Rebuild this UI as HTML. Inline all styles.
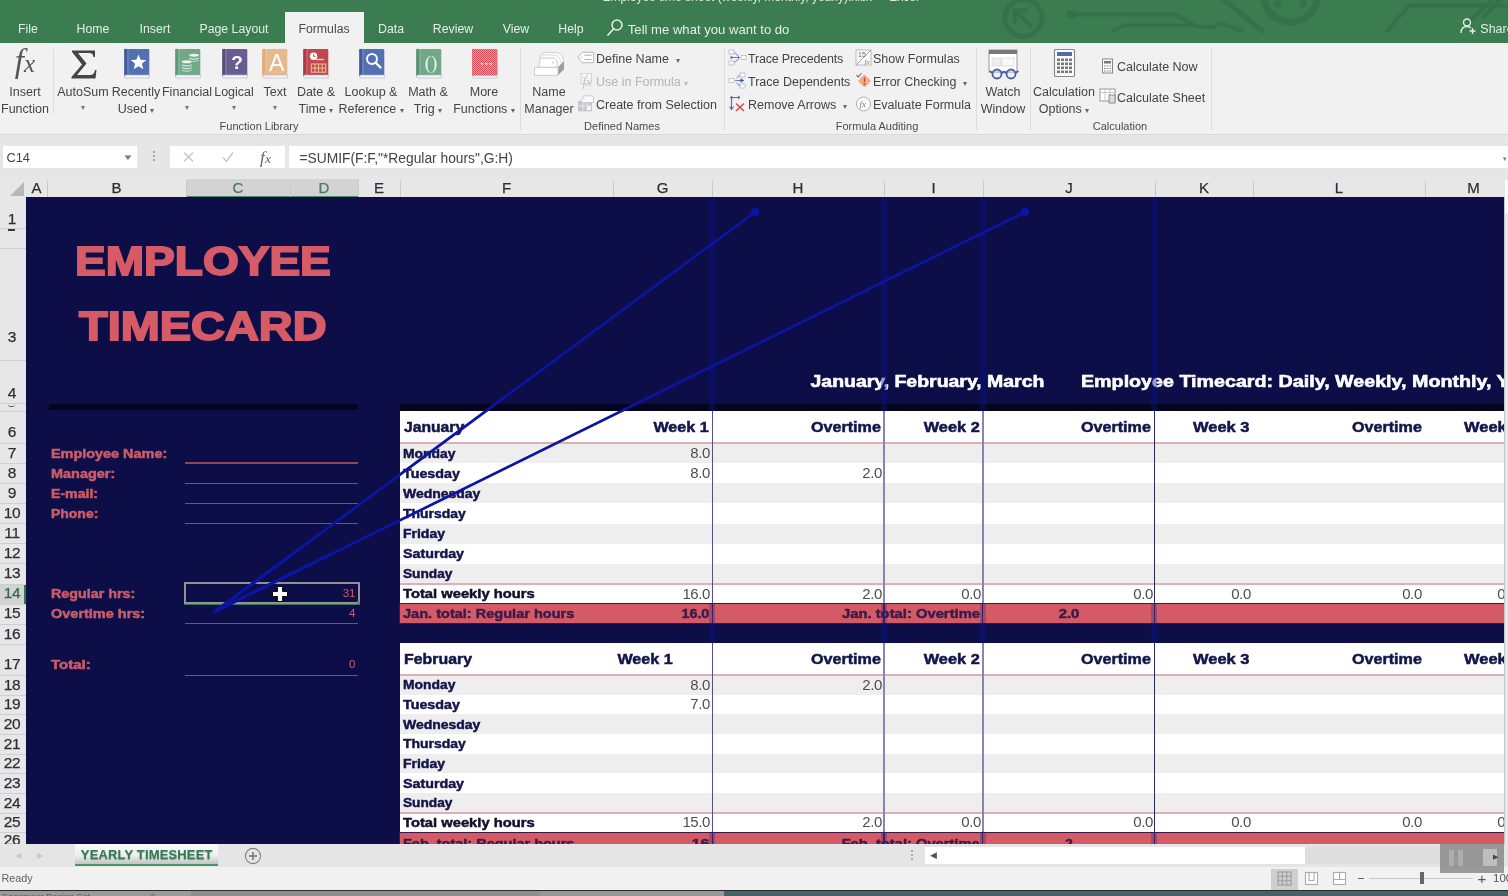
<!DOCTYPE html><html><head><meta charset="utf-8"><title>Excel</title><style>
html,body{margin:0;padding:0}body{width:1508px;height:896px;position:relative;overflow:hidden;background:#f1f1f1;font-family:"Liberation Sans",sans-serif}
.hv{transform-origin:left center}.hvr{transform-origin:right center}.hvc{transform-origin:center center}
</style></head><body><div style="position:absolute;left:0;top:0;width:1508px;height:896px;will-change:transform">
<div style="position:absolute;left:0px;top:0px;width:1508px;height:43.6px;background:#3b7c50;"></div>
<svg style="position:absolute;left:960px;top:0" width="548" height="43" viewBox="960 0 548 43"><g fill="none" stroke="#35724a" stroke-width="4.5" stroke-linecap="round" stroke-linejoin="round"><circle cx="1023.5" cy="18" r="18.5" stroke-width="5"/><path d="M1016 11 L1030 26 M1015 10.500 h11 M1015 10.500 v11" stroke-width="4.5"/><path d="M1071 14.500 H1174 L1198 27 H1214 L1220 23 L1242 31" stroke-width="4"/><circle cx="1071" cy="14.500" r="3" stroke-width="3"/><path d="M1113 31 L1124 25.500 H1190" stroke-width="3.5"/><path d="M1222 -2 L1262 31" stroke-width="5"/><circle cx="1290.500" cy="-5" r="27" stroke-width="7"/><circle cx="1278" cy="4" r="1.500"/><circle cx="1303" cy="4" r="1.500"/><path d="M1387 31 L1409 5.500 H1508 M1469 22 L1494 -2 M1484 16 L1500 0" stroke-width="4"/></g></svg>
<div style="position:absolute;top:-10.6px;line-height:16px;font-size:12px;color:#dfeae2;font-weight:normal;white-space:nowrap;font-family:'Liberation Sans',sans-serif;left:602.4px;">Employee time sheet (weekly, monthly, yearly).xlsx&nbsp; -&nbsp; Excel</div>
<div style="position:absolute;left:285px;top:12px;width:79.3px;height:32px;background:#f1f1f1;"></div>
<div style="position:absolute;top:21.15px;line-height:16.3px;font-size:12.3px;color:#e4efe7;font-weight:normal;white-space:nowrap;font-family:'Liberation Sans',sans-serif;left:-172px;width:400px;text-align:center;">File</div>
<div style="position:absolute;top:21.15px;line-height:16.3px;font-size:12.3px;color:#e4efe7;font-weight:normal;white-space:nowrap;font-family:'Liberation Sans',sans-serif;left:-107px;width:400px;text-align:center;">Home</div>
<div style="position:absolute;top:21.15px;line-height:16.3px;font-size:12.3px;color:#e4efe7;font-weight:normal;white-space:nowrap;font-family:'Liberation Sans',sans-serif;left:-45px;width:400px;text-align:center;">Insert</div>
<div style="position:absolute;top:21.15px;line-height:16.3px;font-size:12.3px;color:#e4efe7;font-weight:normal;white-space:nowrap;font-family:'Liberation Sans',sans-serif;left:34px;width:400px;text-align:center;">Page Layout</div>
<div style="position:absolute;top:21.15px;line-height:16.3px;font-size:12.3px;color:#4a4a4a;font-weight:normal;white-space:nowrap;font-family:'Liberation Sans',sans-serif;left:124px;width:400px;text-align:center;">Formulas</div>
<div style="position:absolute;top:21.15px;line-height:16.3px;font-size:12.3px;color:#e4efe7;font-weight:normal;white-space:nowrap;font-family:'Liberation Sans',sans-serif;left:191px;width:400px;text-align:center;">Data</div>
<div style="position:absolute;top:21.15px;line-height:16.3px;font-size:12.3px;color:#e4efe7;font-weight:normal;white-space:nowrap;font-family:'Liberation Sans',sans-serif;left:253px;width:400px;text-align:center;">Review</div>
<div style="position:absolute;top:21.15px;line-height:16.3px;font-size:12.3px;color:#e4efe7;font-weight:normal;white-space:nowrap;font-family:'Liberation Sans',sans-serif;left:316px;width:400px;text-align:center;">View</div>
<div style="position:absolute;top:21.15px;line-height:16.3px;font-size:12.3px;color:#e4efe7;font-weight:normal;white-space:nowrap;font-family:'Liberation Sans',sans-serif;left:371px;width:400px;text-align:center;">Help</div>
<svg style="position:absolute;left:606px;top:18px" width="18" height="20" viewBox="0 0 18 20"><circle cx="11" cy="7" r="5" fill="none" stroke="#e4efe7" stroke-width="1.5"/><path d="M7.5 11 L2 17" stroke="#e4efe7" stroke-width="1.7" stroke-linecap="round"/></svg>
<div style="position:absolute;top:20.95px;line-height:17.1px;font-size:13.1px;color:#e4efe7;font-weight:normal;white-space:nowrap;font-family:'Liberation Sans',sans-serif;left:627.8px;">Tell me what you want to do</div>
<svg style="position:absolute;left:1459px;top:17px" width="18" height="18" viewBox="0 0 18 18"><g fill="none" stroke="#e4efe7" stroke-width="1.4"><circle cx="8" cy="5.5" r="3.5"/><path d="M2 16 C2 11 5 9.5 8 9.5 C10 9.5 11 10 12 11"/><path d="M10.5 14 h6 M13.5 11 v6"/></g></svg>
<div style="position:absolute;top:20.75px;line-height:16.5px;font-size:12.5px;color:#e4efe7;font-weight:normal;white-space:nowrap;font-family:'Liberation Sans',sans-serif;left:1480.3px;">Share</div>
<div style="position:absolute;left:0px;top:43px;width:1508px;height:91px;background:#f1f1f1;"></div>
<div style="position:absolute;left:0px;top:134px;width:1508px;height:1px;background:#d8d8d8;"></div>
<div style="position:absolute;left:0px;top:135px;width:1508px;height:43px;background:#e6e6e6;"></div>
<div style="position:absolute;left:53px;top:49px;width:1px;height:64px;background:#dedede;"></div>
<div style="position:absolute;left:520px;top:48px;width:1px;height:82px;background:#dcdcdc;"></div>
<div style="position:absolute;left:724px;top:48px;width:1px;height:82px;background:#dcdcdc;"></div>
<div style="position:absolute;left:976px;top:48px;width:1px;height:82px;background:#dcdcdc;"></div>
<div style="position:absolute;left:1030px;top:48px;width:1px;height:82px;background:#dcdcdc;"></div>
<div style="position:absolute;left:1211px;top:48px;width:1px;height:82px;background:#dcdcdc;"></div>
<div style="position:absolute;top:43.3px;line-height:37px;font-size:33px;color:#555;font-weight:normal;white-space:nowrap;font-family:'Liberation Serif',sans-serif;left:-175px;width:400px;text-align:center;"><i>f</i><i style="font-size:25px">x</i></div>
<div style="position:absolute;top:84.05px;line-height:16.5px;font-size:12.5px;color:#444444;font-weight:normal;white-space:nowrap;font-family:'Liberation Sans',sans-serif;left:-175px;width:400px;text-align:center;">Insert</div>
<div style="position:absolute;top:100.85px;line-height:16.5px;font-size:12.5px;color:#444444;font-weight:normal;white-space:nowrap;font-family:'Liberation Sans',sans-serif;left:-175px;width:400px;text-align:center;">Function</div>
<svg style="position:absolute;left:70px;top:49px" width="28" height="30" viewBox="0 0 28 30"><path d="M2 1.5 H25 V8 H23.5 C23 5 22 4 19 4 H8 L16.5 14.5 L7 26 H20 C23 26 24.5 24.5 25 21 H26.5 L25.5 29.5 H1.5 V28 L12 15.5 L2 3 Z" fill="#444"/></svg>
<div style="position:absolute;top:84.05px;line-height:16.5px;font-size:12.5px;color:#444444;font-weight:normal;white-space:nowrap;font-family:'Liberation Sans',sans-serif;left:-117px;width:400px;text-align:center;">AutoSum</div>
<div style="position:absolute;top:102.25px;line-height:11.5px;font-size:7.5px;color:#777;font-weight:normal;white-space:nowrap;font-family:'Liberation Sans',sans-serif;left:-117px;width:400px;text-align:center;">&#9662;</div>
<svg style="position:absolute;left:123.6px;top:48px" width="26" height="32" viewBox="0 0 26 32"><rect x="0.300" y="0.900" width="25" height="27.500" rx="1.300" fill="#5270b2"/><rect x="0.300" y="0.900" width="3.200" height="27.500" fill="#3a5591" opacity="0.8"/><rect x="3.500" y="0.900" width="0.800" height="26" fill="#fff" opacity="0.35"/><path d="M1.200 27 h24.100 v3 h-24.100 q-1.200 -1.500 0 -3z" fill="#f4f4fa" stroke="#b4b4c6" stroke-width="0.600"/><path d="M14.5 6.5 l2.1 5.2 5.6 .4 -4.3 3.6 1.4 5.5 -4.8 -3 -4.8 3 1.4 -5.5 -4.3 -3.6 5.6 -.4z" fill="#fff"/></svg>
<div style="position:absolute;top:84.05px;line-height:16.5px;font-size:12.5px;color:#444444;font-weight:normal;white-space:nowrap;font-family:'Liberation Sans',sans-serif;left:-64px;width:400px;text-align:center;">Recently</div>
<div style="position:absolute;top:100.85px;line-height:16.5px;font-size:12.5px;color:#444444;font-weight:normal;white-space:nowrap;font-family:'Liberation Sans',sans-serif;left:-64px;width:400px;text-align:center;">Used <span style="font-size:8px;color:#666">&#9662;</span></div>
<svg style="position:absolute;left:175.1px;top:48px" width="26" height="32" viewBox="0 0 26 32"><rect x="0.300" y="0.900" width="25" height="27.500" rx="1.300" fill="#70a888"/><rect x="0.300" y="0.900" width="3.200" height="27.500" fill="#5b9474" opacity="0.8"/><rect x="3.500" y="0.900" width="0.800" height="26" fill="#fff" opacity="0.35"/><path d="M1.200 27 h24.100 v3 h-24.100 q-1.200 -1.500 0 -3z" fill="#f4f4fa" stroke="#b4b4c6" stroke-width="0.600"/><g fill="#eef6f0" stroke="#70a888" stroke-width="0.5"><ellipse cx="19" cy="7.300" rx="5" ry="1.700"/><path d="M14 9.300 q5 2.600 10 0 v1.500 q-5 2.600 -10 0z M14 11.800 q5 2.600 10 0 v1 q-5 2.600 -10 0z"/><ellipse cx="11.700" cy="13.800" rx="5.200" ry="1.800"/><path d="M6.500 16 q5.200 2.600 10.400 0 v1.500 q-5.200 2.600 -10.400 0z M6.500 18.700 q5.200 2.600 10.400 0 v1.500 q-5.200 2.600 -10.400 0z M6.500 21.400 q5.200 2.600 10.400 0 v1.200 q-5.200 2.600 -10.400 0z"/></g></svg>
<div style="position:absolute;top:84.05px;line-height:16.5px;font-size:12.5px;color:#444444;font-weight:normal;white-space:nowrap;font-family:'Liberation Sans',sans-serif;left:-13px;width:400px;text-align:center;">Financial</div>
<div style="position:absolute;top:102.25px;line-height:11.5px;font-size:7.5px;color:#777;font-weight:normal;white-space:nowrap;font-family:'Liberation Sans',sans-serif;left:-13px;width:400px;text-align:center;">&#9662;</div>
<svg style="position:absolute;left:222.0px;top:48px" width="26" height="32" viewBox="0 0 26 32"><rect x="0.300" y="0.900" width="25" height="27.500" rx="1.300" fill="#675d8e"/><rect x="0.300" y="0.900" width="3.200" height="27.500" fill="#564a7c" opacity="0.8"/><rect x="3.500" y="0.900" width="0.800" height="26" fill="#fff" opacity="0.35"/><path d="M1.200 27 h24.100 v3 h-24.100 q-1.200 -1.500 0 -3z" fill="#f4f4fa" stroke="#b4b4c6" stroke-width="0.600"/><text x="15" y="21" font-family="Liberation Sans" font-weight="bold" font-size="19" fill="#fff" text-anchor="middle">?</text></svg>
<div style="position:absolute;top:84.05px;line-height:16.5px;font-size:12.5px;color:#444444;font-weight:normal;white-space:nowrap;font-family:'Liberation Sans',sans-serif;left:34px;width:400px;text-align:center;">Logical</div>
<div style="position:absolute;top:102.25px;line-height:11.5px;font-size:7.5px;color:#777;font-weight:normal;white-space:nowrap;font-family:'Liberation Sans',sans-serif;left:34px;width:400px;text-align:center;">&#9662;</div>
<svg style="position:absolute;left:262.4px;top:48px" width="26" height="32" viewBox="0 0 26 32"><rect x="0.300" y="0.900" width="25" height="27.500" rx="1.300" fill="#e6b98e"/><rect x="0.300" y="0.900" width="3.200" height="27.500" fill="#dda873" opacity="0.8"/><rect x="3.500" y="0.900" width="0.800" height="26" fill="#fff" opacity="0.35"/><path d="M1.200 27 h24.100 v3 h-24.100 q-1.200 -1.500 0 -3z" fill="#f4f4fa" stroke="#b4b4c6" stroke-width="0.600"/><text x="14.600" y="22.500" font-family="Liberation Sans" font-size="23" fill="#fff" text-anchor="middle">A</text></svg>
<div style="position:absolute;top:84.05px;line-height:16.5px;font-size:12.5px;color:#444444;font-weight:normal;white-space:nowrap;font-family:'Liberation Sans',sans-serif;left:75px;width:400px;text-align:center;">Text</div>
<div style="position:absolute;top:102.25px;line-height:11.5px;font-size:7.5px;color:#777;font-weight:normal;white-space:nowrap;font-family:'Liberation Sans',sans-serif;left:75px;width:400px;text-align:center;">&#9662;</div>
<svg style="position:absolute;left:303.2px;top:48px" width="26" height="32" viewBox="0 0 26 32"><rect x="0.300" y="0.900" width="25" height="27.500" rx="1.300" fill="#c1464f"/><rect x="0.300" y="0.900" width="3.200" height="27.500" fill="#a8363f" opacity="0.8"/><rect x="3.500" y="0.900" width="0.800" height="26" fill="#fff" opacity="0.35"/><path d="M1.200 27 h24.100 v3 h-24.100 q-1.200 -1.500 0 -3z" fill="#f4f4fa" stroke="#b4b4c6" stroke-width="0.600"/><circle cx="10.600" cy="8.200" r="3.700" fill="#fff"/><path d="M10.600 6 v2.400 h2" stroke="#c1464f" stroke-width="0.900" fill="none"/><path d="M13 11.500 h8" stroke="#f3d2b0" stroke-width="1.400"/><g fill="none" stroke="#f1c493" stroke-width="1"><rect x="8.300" y="16" width="14.500" height="8.200"/><path d="M8.300 20.100h14.500 M12 16v8.200 M15.600 16v8.200 M19.200 16v8.200"/></g></svg>
<div style="position:absolute;top:84.05px;line-height:16.5px;font-size:12.5px;color:#444444;font-weight:normal;white-space:nowrap;font-family:'Liberation Sans',sans-serif;left:116px;width:400px;text-align:center;">Date &amp;</div>
<div style="position:absolute;top:100.85px;line-height:16.5px;font-size:12.5px;color:#444444;font-weight:normal;white-space:nowrap;font-family:'Liberation Sans',sans-serif;left:116px;width:400px;text-align:center;">Time <span style="font-size:8px;color:#666">&#9662;</span></div>
<svg style="position:absolute;left:359.0px;top:48px" width="26" height="32" viewBox="0 0 26 32"><rect x="0.300" y="0.900" width="25" height="27.500" rx="1.300" fill="#5270b2"/><rect x="0.300" y="0.900" width="3.200" height="27.500" fill="#3a5591" opacity="0.8"/><rect x="3.500" y="0.900" width="0.800" height="26" fill="#fff" opacity="0.35"/><path d="M1.200 27 h24.100 v3 h-24.100 q-1.200 -1.500 0 -3z" fill="#f4f4fa" stroke="#b4b4c6" stroke-width="0.600"/><circle cx="13" cy="11" r="5" fill="none" stroke="#fff" stroke-width="2"/><path d="M16.5 14.5 l5 5" stroke="#fff" stroke-width="2.4" stroke-linecap="round"/></svg>
<div style="position:absolute;top:84.05px;line-height:16.5px;font-size:12.5px;color:#444444;font-weight:normal;white-space:nowrap;font-family:'Liberation Sans',sans-serif;left:171px;width:400px;text-align:center;">Lookup &amp;</div>
<div style="position:absolute;top:100.85px;line-height:16.5px;font-size:12.5px;color:#444444;font-weight:normal;white-space:nowrap;font-family:'Liberation Sans',sans-serif;left:171px;width:400px;text-align:center;">Reference <span style="font-size:8px;color:#666">&#9662;</span></div>
<svg style="position:absolute;left:415.6px;top:48px" width="26" height="32" viewBox="0 0 26 32"><rect x="0.300" y="0.900" width="25" height="27.500" rx="1.300" fill="#70a888"/><rect x="0.300" y="0.900" width="3.200" height="27.500" fill="#548a6b" opacity="0.8"/><rect x="3.500" y="0.900" width="0.800" height="26" fill="#fff" opacity="0.35"/><path d="M1.200 27 h24.100 v3 h-24.100 q-1.200 -1.500 0 -3z" fill="#f4f4fa" stroke="#b4b4c6" stroke-width="0.600"/><text x="15" y="21" font-family="Liberation Serif" font-size="19" fill="#eaf4ee" text-anchor="middle">()</text></svg>
<div style="position:absolute;top:84.05px;line-height:16.5px;font-size:12.5px;color:#444444;font-weight:normal;white-space:nowrap;font-family:'Liberation Sans',sans-serif;left:228px;width:400px;text-align:center;">Math &amp;</div>
<div style="position:absolute;top:100.85px;line-height:16.5px;font-size:12.5px;color:#444444;font-weight:normal;white-space:nowrap;font-family:'Liberation Sans',sans-serif;left:228px;width:400px;text-align:center;">Trig <span style="font-size:8px;color:#666">&#9662;</span></div>
<svg style="position:absolute;left:472.0px;top:48px" width="26" height="32" viewBox="0 0 26 32"><rect x="0.300" y="0.900" width="25" height="27.500" rx="1.300" fill="#dd7a54"/><rect x="0.300" y="0.900" width="3.200" height="27.500" fill="#d4644a" opacity="0.8"/><rect x="3.500" y="0.900" width="0.800" height="26" fill="#fff" opacity="0.35"/><path d="M1.200 27 h24.100 v3 h-24.100 q-1.200 -1.500 0 -3z" fill="#f4f4fa" stroke="#b4b4c6" stroke-width="0.600"/><defs><pattern id="dz" width="2" height="2" patternUnits="userSpaceOnUse"><rect width="2" height="2" fill="#e3a465"/><rect width="1" height="1" fill="#d6505c"/><rect x="1" y="1" width="1" height="1" fill="#d6505c"/></pattern></defs><rect x="0.300" y="0.900" width="25" height="26.500" rx="1.300" fill="url(#dz)"/><g fill="#fbe6c8"><rect x="9" y="15" width="2.200" height="1.600"/><rect x="13.300" y="15" width="2.200" height="1.600"/><rect x="17.600" y="15" width="2.200" height="1.600"/></g></svg>
<div style="position:absolute;top:84.05px;line-height:16.5px;font-size:12.5px;color:#444444;font-weight:normal;white-space:nowrap;font-family:'Liberation Sans',sans-serif;left:284px;width:400px;text-align:center;">More</div>
<div style="position:absolute;top:100.85px;line-height:16.5px;font-size:12.5px;color:#444444;font-weight:normal;white-space:nowrap;font-family:'Liberation Sans',sans-serif;left:284px;width:400px;text-align:center;">Functions <span style="font-size:8px;color:#666">&#9662;</span></div>
<div style="position:absolute;top:119.0px;line-height:15px;font-size:11px;color:#4a4a4a;font-weight:normal;white-space:nowrap;font-family:'Liberation Sans',sans-serif;left:59px;width:400px;text-align:center;">Function Library</div>
<svg style="position:absolute;left:533px;top:50px" width="34" height="28" viewBox="0 0 34 28"><path d="M5.500 17.500 L7.500 6 Q8.300 2.500 11.500 2.500 H24 Q30.500 4 30.500 11.500 L25 17.500z" fill="#fdfdfd" stroke="#c9c9cf" stroke-width="0.900"/><path d="M9 5 H23 Q27.500 6.500 27.500 13 M8 8 H21.500 Q25 9.500 25 15" fill="none" stroke="#d2d2d8" stroke-width="0.800"/><path d="M6 17.300 L7.200 8.500 H21.500 Q24 10 24 14 L24 17.300z" fill="#fff" stroke="#cfcfd5" stroke-width="0.700"/><path d="M25 17.300 L31 11.300 V19.300 L25 25.300z" fill="#9c9ca4"/><rect x="1.600" y="17.300" width="23.400" height="8" fill="#fff" stroke="#c6c6cc" stroke-width="0.900"/><circle cx="20" cy="12.500" r="0.900" fill="#ccc"/></svg>
<div style="position:absolute;top:84.05px;line-height:16.5px;font-size:12.5px;color:#444444;font-weight:normal;white-space:nowrap;font-family:'Liberation Sans',sans-serif;left:349px;width:400px;text-align:center;">Name</div>
<div style="position:absolute;top:100.85px;line-height:16.5px;font-size:12.5px;color:#444444;font-weight:normal;white-space:nowrap;font-family:'Liberation Sans',sans-serif;left:349px;width:400px;text-align:center;">Manager</div>
<svg style="position:absolute;left:577px;top:51px" width="18" height="14" viewBox="0 0 18 14"><path d="M5 1.300 h11.700 v10.400 h-11.700 l-4.300 -5.200z" fill="#fcfcfc" stroke="#b9b9c0" stroke-width="1"/><path d="M7.500 4.300h7M7.500 8.500h7" stroke="#b0b0b6" stroke-width="1.100"/><circle cx="3.800" cy="6.500" r="0.700" fill="#bbb"/></svg>
<div style="position:absolute;top:51.15px;line-height:16.5px;font-size:12.5px;color:#444444;font-weight:normal;white-space:nowrap;font-family:'Liberation Sans',sans-serif;left:596px;">Define Name &nbsp;<span style="font-size:8px;color:#666">&#9662;</span></div>
<svg style="position:absolute;left:579px;top:72px" width="16" height="17" viewBox="0 0 16 17"><rect x="2" y="1.500" width="10.500" height="10" fill="#f7f7f7" stroke="#d2d2d6" stroke-width="0.900"/><path d="M3.500 4.500 l2 2.500 3 -4.500" fill="none" stroke="#d0d0d4" stroke-width="0.900"/><text x="3.500" y="13.500" font-family="Liberation Serif" font-style="italic" font-size="13" fill="#c2c2c6">fx</text></svg>
<div style="position:absolute;top:74.15px;line-height:16.5px;font-size:12.5px;color:#b4b4b4;font-weight:normal;white-space:nowrap;font-family:'Liberation Sans',sans-serif;left:596px;">Use in Formula <span style="font-size:8px;color:#bbb">&#9662;</span></div>
<svg style="position:absolute;left:578px;top:95px" width="17" height="17" viewBox="0 0 17 17"><rect x="0.800" y="6.500" width="12.500" height="9.300" fill="#c9c9cf" stroke="#b4b4ba" stroke-width="0.800"/><path d="M0.800 11h12.500M5 6.500v9.300M9.200 6.500v9.300" stroke="#e8e8ec" stroke-width="0.900"/><rect x="9.300" y="11.500" width="3.600" height="3.600" fill="#fff"/><path d="M3.500 5.500 L4.800 1.800 Q5.200 0.800 6.200 0.800 H14 Q15.500 0.800 15.500 2.200 V7.500 H3.500z" fill="#fdfdfd" stroke="#c0c0c6" stroke-width="0.800"/><circle cx="6" cy="3.800" r="0.600" fill="#aaa"/></svg>
<div style="position:absolute;top:97.05px;line-height:16.5px;font-size:12.5px;color:#444444;font-weight:normal;white-space:nowrap;font-family:'Liberation Sans',sans-serif;left:596px;">Create from Selection</div>
<div style="position:absolute;top:119.0px;line-height:15px;font-size:11px;color:#4a4a4a;font-weight:normal;white-space:nowrap;font-family:'Liberation Sans',sans-serif;left:422px;width:400px;text-align:center;">Defined Names</div>
<svg style="position:absolute;left:728px;top:49px" width="20" height="18" viewBox="0 0 20 18"><g fill="#fcfcfc" stroke="#c2c2c8" stroke-width="0.900"><rect x="1" y="1" width="5" height="4"/><rect x="1" y="12" width="5" height="4"/><rect x="13" y="6.500" width="5" height="4"/></g><path d="M3 8.500h8M6.500 3.500 l4 3.500 M6.500 13.500 l4 -3.500" stroke="#6b7cc0" stroke-width="1" fill="none"/><path d="M9.500 6.500l2 2-2 2" stroke="#6b7cc0" stroke-width="1" fill="none"/><circle cx="3.500" cy="8.500" r="1.200" fill="#5a6cb4"/></svg>
<div style="position:absolute;top:51.15px;line-height:16.5px;font-size:12.5px;color:#444444;font-weight:normal;white-space:nowrap;font-family:'Liberation Sans',sans-serif;left:748px;letter-spacing:-0.2px;">Trace Precedents</div>
<svg style="position:absolute;left:728px;top:72px" width="20" height="18" viewBox="0 0 20 18"><g fill="#fcfcfc" stroke="#c2c2c8" stroke-width="0.900"><rect x="1" y="6.500" width="5" height="4"/><rect x="12" y="1" width="5" height="4"/><rect x="12" y="12" width="5" height="4"/></g><path d="M7 8.500h9M8.500 6 l3.500 -3 M8.500 11 l3.500 3" stroke="#6b7cc0" stroke-width="1" fill="none"/><path d="M13.500 6.500v4M11.500 8.500h4" stroke="#4a5cb0" stroke-width="1.300"/></svg>
<div style="position:absolute;top:74.15px;line-height:16.5px;font-size:12.5px;color:#444444;font-weight:normal;white-space:nowrap;font-family:'Liberation Sans',sans-serif;left:748px;">Trace Dependents</div>
<svg style="position:absolute;left:728px;top:95px" width="20" height="18" viewBox="0 0 20 18"><path d="M3 2.500h9M3.500 3v11M1.500 11.500l2 3 2-3" stroke="#5668b4" stroke-width="1.100" fill="none"/><path d="M10 1l2 1.500-2 1.500" stroke="#5668b4" stroke-width="1" fill="none"/><circle cx="3.500" cy="2.500" r="1.300" fill="#5668b4"/><path d="M8 8.500l8 7.500M16 8.500l-8 7.500" stroke="#d44848" stroke-width="1.500"/></svg>
<div style="position:absolute;top:97.05px;line-height:16.5px;font-size:12.5px;color:#444444;font-weight:normal;white-space:nowrap;font-family:'Liberation Sans',sans-serif;left:748px;">Remove Arrows &nbsp;<span style="font-size:8px;color:#666">&#9662;</span></div>
<svg style="position:absolute;left:855px;top:49px" width="18" height="18" viewBox="0 0 18 18"><rect x="1" y="1" width="15" height="15" fill="#fbfbfb" stroke="#b4b4ba" stroke-width="0.900"/><path d="M1 16L16 1" stroke="#9a9aa0" stroke-width="0.900"/><text x="3" y="8" font-size="7" fill="#666" font-family="Liberation Sans">15</text><text x="9.500" y="15" font-size="7" font-style="italic" fill="#777" font-family="Liberation Serif">fx</text></svg>
<div style="position:absolute;top:51.15px;line-height:16.5px;font-size:12.5px;color:#444444;font-weight:normal;white-space:nowrap;font-family:'Liberation Sans',sans-serif;left:873px;">Show Formulas</div>
<svg style="position:absolute;left:855px;top:72px" width="18" height="18" viewBox="0 0 18 18"><path d="M9.500 3 l6 6 -6 6 -6 -6z" fill="#eeb083" stroke="#e69a62" stroke-width="0.800"/><path d="M9.500 5.500v4.500" stroke="#d03c3c" stroke-width="1.400"/><circle cx="9.500" cy="12" r="0.900" fill="#d03c3c"/><path d="M1.500 3l2 2 3-4" stroke="#6a7088" stroke-width="1.100" fill="none"/></svg>
<div style="position:absolute;top:74.15px;line-height:16.5px;font-size:12.5px;color:#444444;font-weight:normal;white-space:nowrap;font-family:'Liberation Sans',sans-serif;left:873px;">Error Checking &nbsp;<span style="font-size:8px;color:#666">&#9662;</span></div>
<svg style="position:absolute;left:855px;top:95px" width="18" height="18" viewBox="0 0 18 18"><circle cx="8.500" cy="9" r="7" fill="#fcfcfc" stroke="#a8a8ae" stroke-width="0.900"/><text x="4.500" y="12" font-size="9" font-style="italic" fill="#777" font-family="Liberation Serif">fx</text></svg>
<div style="position:absolute;top:97.05px;line-height:16.5px;font-size:12.5px;color:#444444;font-weight:normal;white-space:nowrap;font-family:'Liberation Sans',sans-serif;left:873px;">Evaluate Formula</div>
<div style="position:absolute;top:119.0px;line-height:15px;font-size:11px;color:#4a4a4a;font-weight:normal;white-space:nowrap;font-family:'Liberation Sans',sans-serif;left:677px;width:400px;text-align:center;">Formula Auditing</div>
<svg style="position:absolute;left:987px;top:49px" width="34" height="34" viewBox="0 0 34 34"><rect x="2" y="1" width="28" height="22" fill="#fff" stroke="#999" stroke-width="1"/><rect x="2" y="1" width="28" height="4" fill="#777"/><rect x="5" y="9" width="9" height="8" fill="#eee" stroke="#ccc" stroke-width=".6"/><rect x="15" y="9" width="12" height="8" fill="#fafafa" stroke="#ccc" stroke-width=".6"/><g fill="none" stroke="#4660b0" stroke-width="1.8"><circle cx="10" cy="25" r="4.5"/><circle cx="24" cy="25" r="4.5"/><path d="M14.5 24 q2.5 -2 5 0 M5.5 24 l-3 -2 M28.5 24 l3 -2"/></g></svg>
<div style="position:absolute;top:84.05px;line-height:16.5px;font-size:12.5px;color:#444444;font-weight:normal;white-space:nowrap;font-family:'Liberation Sans',sans-serif;left:803px;width:400px;text-align:center;">Watch</div>
<div style="position:absolute;top:100.85px;line-height:16.5px;font-size:12.5px;color:#444444;font-weight:normal;white-space:nowrap;font-family:'Liberation Sans',sans-serif;left:803px;width:400px;text-align:center;">Window</div>
<svg style="position:absolute;left:1053px;top:48px" width="24" height="32" viewBox="0 0 24 32"><rect x="1.5" y="1.5" width="20" height="27" rx="1" fill="#fff" stroke="#888" stroke-width="1.2"/><rect x="4" y="4" width="15" height="4" fill="#4d6db1"/><g fill="#777"><rect x="4" y="10.500" width="3" height="2.6"/><rect x="8" y="10.500" width="3" height="2.6"/><rect x="12" y="10.500" width="3" height="2.6"/><rect x="16" y="10.500" width="3" height="2.6"/><rect x="4" y="14.500" width="3" height="2.6"/><rect x="8" y="14.500" width="3" height="2.6"/><rect x="12" y="14.500" width="3" height="2.6"/><rect x="16" y="14.500" width="3" height="2.6"/><rect x="4" y="18.500" width="3" height="2.6"/><rect x="8" y="18.500" width="3" height="2.6"/><rect x="12" y="18.500" width="3" height="2.6"/><rect x="16" y="18.500" width="3" height="2.6"/><rect x="4" y="22.500" width="3" height="2.6"/><rect x="8" y="22.500" width="3" height="2.6"/><rect x="12" y="22.500" width="3" height="2.6"/><rect x="16" y="22.500" width="3" height="2.6"/></g></svg>
<div style="position:absolute;top:84.05px;line-height:16.5px;font-size:12.5px;color:#444444;font-weight:normal;white-space:nowrap;font-family:'Liberation Sans',sans-serif;left:864px;width:400px;text-align:center;">Calculation</div>
<div style="position:absolute;top:100.85px;line-height:16.5px;font-size:12.5px;color:#444444;font-weight:normal;white-space:nowrap;font-family:'Liberation Sans',sans-serif;left:864px;width:400px;text-align:center;">Options <span style="font-size:8px;color:#666">&#9662;</span></div>
<svg style="position:absolute;left:1101px;top:58px" width="14" height="16" viewBox="0 0 14 16"><rect x="1.5" y="1" width="10" height="14" fill="#fff" stroke="#888" stroke-width="1"/><rect x="3" y="3" width="7" height="2.5" fill="#777"/><path d="M3 8h7M3 10.500h7M3 13h7" stroke="#888" stroke-width="1.2" stroke-dasharray="1.7 1"/></svg>
<div style="position:absolute;top:59.05px;line-height:16.5px;font-size:12.5px;color:#444444;font-weight:normal;white-space:nowrap;font-family:'Liberation Sans',sans-serif;left:1117px;">Calculate Now</div>
<svg style="position:absolute;left:1099px;top:88px" width="18" height="16" viewBox="0 0 18 16"><rect x="1" y="1" width="15" height="12" fill="#fff" stroke="#999" stroke-width="1"/><path d="M1 4.500h15M6 1v12M11 1v12" stroke="#bbb" stroke-width="0.8"/><rect x="10" y="7" width="6" height="8" fill="#ddd" stroke="#777" stroke-width="0.8"/></svg>
<div style="position:absolute;top:89.55px;line-height:16.5px;font-size:12.5px;color:#444444;font-weight:normal;white-space:nowrap;font-family:'Liberation Sans',sans-serif;left:1117px;">Calculate Sheet</div>
<div style="position:absolute;top:119.0px;line-height:15px;font-size:11px;color:#4a4a4a;font-weight:normal;white-space:nowrap;font-family:'Liberation Sans',sans-serif;left:920px;width:400px;text-align:center;">Calculation</div>
<div style="position:absolute;left:3px;top:146px;width:134px;height:22px;background:#fff;"></div>
<div style="position:absolute;top:150.1px;line-height:16.8px;font-size:12.8px;color:#444;font-weight:normal;white-space:nowrap;font-family:'Liberation Sans',sans-serif;left:6.5px;">C14</div>
<div style="position:absolute;top:152.0px;line-height:12px;font-size:8px;color:#7a7a7a;font-weight:normal;white-space:nowrap;font-family:'Liberation Sans',sans-serif;left:-72.5px;width:400px;text-align:center;transform:scaleX(1.5);">&#9660;</div>
<div style="position:absolute;left:153px;top:151px;width:2px;height:12px;background:repeating-linear-gradient(#aaa 0 2px,transparent 2px 4px)"></div>
<div style="position:absolute;left:170px;top:146px;width:115px;height:22px;background:#fff;"></div>
<svg style="position:absolute;left:181px;top:150px" width="60" height="14" viewBox="0 0 60 14"><path d="M3 2.500l9 9M12 2.500l-9 9" stroke="#c4c4c4" stroke-width="1.3"/><path d="M42 7.500l3.500 4 6.500 -9" fill="none" stroke="#c4c4c4" stroke-width="1.3"/></svg>
<div style="position:absolute;top:146.75px;line-height:21.5px;font-size:17.5px;color:#666;font-weight:normal;white-space:nowrap;font-family:'Liberation Serif',sans-serif;left:65.5px;width:400px;text-align:center;"><i>f</i><i style="font-size:13.5px">x</i></div>
<div style="position:absolute;left:289px;top:146px;width:1219px;height:22px;background:#fff;"></div>
<div style="position:absolute;top:149.6px;line-height:17.8px;font-size:13.8px;color:#444;font-weight:normal;white-space:nowrap;font-family:'Liberation Sans',sans-serif;left:299.5px;">=SUMIF(F:F,"*Regular hours",G:H)</div>
<div style="position:absolute;top:152.5px;line-height:11px;font-size:7px;color:#777;font-weight:normal;white-space:nowrap;font-family:'Liberation Sans',sans-serif;left:1305px;width:400px;text-align:center;">&#9662;</div>
<div style="position:absolute;left:0px;top:178px;width:1508px;height:19px;background:#e7e7e7;"></div>
<div style="position:absolute;left:186px;top:179px;width:173px;height:18px;background:#d3d3d3;"></div>
<div style="position:absolute;left:186px;top:195.5px;width:173px;height:1.5px;background:#4d8a63;"></div>
<div style="position:absolute;top:178.2px;line-height:19px;font-size:15px;color:#2e2e3a;font-weight:normal;white-space:nowrap;font-family:'Liberation Sans',sans-serif;left:-163.5px;width:400px;text-align:center;-webkit-text-stroke:0.25px #2e2e3a;">A</div>
<div style="position:absolute;left:47px;top:181px;width:1px;height:16px;background:#c9c9c9;"></div>
<div style="position:absolute;top:178.2px;line-height:19px;font-size:15px;color:#2e2e3a;font-weight:normal;white-space:nowrap;font-family:'Liberation Sans',sans-serif;left:-83.5px;width:400px;text-align:center;-webkit-text-stroke:0.25px #2e2e3a;">B</div>
<div style="position:absolute;left:186px;top:181px;width:1px;height:16px;background:#c9c9c9;"></div>
<div style="position:absolute;top:178.2px;line-height:19px;font-size:15px;color:#4f7a60;font-weight:normal;white-space:nowrap;font-family:'Liberation Sans',sans-serif;left:38.0px;width:400px;text-align:center;-webkit-text-stroke:0.25px #4f7a60;">C</div>
<div style="position:absolute;left:290px;top:181px;width:1px;height:16px;background:#c9c9c9;"></div>
<div style="position:absolute;top:178.2px;line-height:19px;font-size:15px;color:#4f7a60;font-weight:normal;white-space:nowrap;font-family:'Liberation Sans',sans-serif;left:124.0px;width:400px;text-align:center;-webkit-text-stroke:0.25px #4f7a60;">D</div>
<div style="position:absolute;left:358px;top:181px;width:1px;height:16px;background:#c9c9c9;"></div>
<div style="position:absolute;top:178.2px;line-height:19px;font-size:15px;color:#2e2e3a;font-weight:normal;white-space:nowrap;font-family:'Liberation Sans',sans-serif;left:179.0px;width:400px;text-align:center;-webkit-text-stroke:0.25px #2e2e3a;">E</div>
<div style="position:absolute;left:400px;top:181px;width:1px;height:16px;background:#c9c9c9;"></div>
<div style="position:absolute;top:178.2px;line-height:19px;font-size:15px;color:#2e2e3a;font-weight:normal;white-space:nowrap;font-family:'Liberation Sans',sans-serif;left:306.5px;width:400px;text-align:center;-webkit-text-stroke:0.25px #2e2e3a;">F</div>
<div style="position:absolute;left:613px;top:181px;width:1px;height:16px;background:#c9c9c9;"></div>
<div style="position:absolute;top:178.2px;line-height:19px;font-size:15px;color:#2e2e3a;font-weight:normal;white-space:nowrap;font-family:'Liberation Sans',sans-serif;left:462.5px;width:400px;text-align:center;-webkit-text-stroke:0.25px #2e2e3a;">G</div>
<div style="position:absolute;left:712px;top:181px;width:1px;height:16px;background:#c9c9c9;"></div>
<div style="position:absolute;top:178.2px;line-height:19px;font-size:15px;color:#2e2e3a;font-weight:normal;white-space:nowrap;font-family:'Liberation Sans',sans-serif;left:598.0px;width:400px;text-align:center;-webkit-text-stroke:0.25px #2e2e3a;">H</div>
<div style="position:absolute;left:884px;top:181px;width:1px;height:16px;background:#c9c9c9;"></div>
<div style="position:absolute;top:178.2px;line-height:19px;font-size:15px;color:#2e2e3a;font-weight:normal;white-space:nowrap;font-family:'Liberation Sans',sans-serif;left:733.5px;width:400px;text-align:center;-webkit-text-stroke:0.25px #2e2e3a;">I</div>
<div style="position:absolute;left:983px;top:181px;width:1px;height:16px;background:#c9c9c9;"></div>
<div style="position:absolute;top:178.2px;line-height:19px;font-size:15px;color:#2e2e3a;font-weight:normal;white-space:nowrap;font-family:'Liberation Sans',sans-serif;left:869.0px;width:400px;text-align:center;-webkit-text-stroke:0.25px #2e2e3a;">J</div>
<div style="position:absolute;left:1155px;top:181px;width:1px;height:16px;background:#c9c9c9;"></div>
<div style="position:absolute;top:178.2px;line-height:19px;font-size:15px;color:#2e2e3a;font-weight:normal;white-space:nowrap;font-family:'Liberation Sans',sans-serif;left:1004.0px;width:400px;text-align:center;-webkit-text-stroke:0.25px #2e2e3a;">K</div>
<div style="position:absolute;left:1253px;top:181px;width:1px;height:16px;background:#c9c9c9;"></div>
<div style="position:absolute;top:178.2px;line-height:19px;font-size:15px;color:#2e2e3a;font-weight:normal;white-space:nowrap;font-family:'Liberation Sans',sans-serif;left:1139.0px;width:400px;text-align:center;-webkit-text-stroke:0.25px #2e2e3a;">L</div>
<div style="position:absolute;left:1425px;top:181px;width:1px;height:16px;background:#c9c9c9;"></div>
<div style="position:absolute;top:178.2px;line-height:19px;font-size:15px;color:#2e2e3a;font-weight:normal;white-space:nowrap;font-family:'Liberation Sans',sans-serif;left:1273.5px;width:400px;text-align:center;-webkit-text-stroke:0.25px #2e2e3a;">M</div>
<div style="position:absolute;left:1504px;top:181px;width:1px;height:16px;background:#c9c9c9;"></div>
<svg style="position:absolute;left:9px;top:181px" width="16" height="16" viewBox="0 0 16 16"><path d="M15 1v14H1z" fill="#b8b8b8"/></svg>
<div style="position:absolute;left:0px;top:197px;width:26px;height:646.8px;background:#e7e7e7;"></div>
<div style="position:absolute;left:0px;top:583.6px;width:26px;height:20px;background:#d3d3d3;"></div>
<div style="position:absolute;left:24px;top:583.6px;width:2px;height:20px;background:#2d7a4d;"></div>
<div style="position:absolute;top:209.25px;line-height:19.5px;font-size:15.5px;color:#2e2e3a;font-weight:normal;white-space:nowrap;font-family:'Liberation Sans',sans-serif;left:-188px;width:400px;text-align:center;-webkit-text-stroke:0.25px #2e2e3a;letter-spacing:-0.3px;">1</div>
<div style="position:absolute;left:0px;top:227.6px;width:26px;height:1px;background:#cfcfcf;"></div>
<div style="position:absolute;left:0px;top:247.7px;width:26px;height:1px;background:#cfcfcf;"></div>
<div style="position:absolute;top:326.85px;line-height:19.5px;font-size:15.5px;color:#2e2e3a;font-weight:normal;white-space:nowrap;font-family:'Liberation Sans',sans-serif;left:-188px;width:400px;text-align:center;-webkit-text-stroke:0.25px #2e2e3a;letter-spacing:-0.3px;">3</div>
<div style="position:absolute;left:0px;top:360.2px;width:26px;height:1px;background:#cfcfcf;"></div>
<div style="position:absolute;top:382.55px;line-height:19.5px;font-size:15.5px;color:#2e2e3a;font-weight:normal;white-space:nowrap;font-family:'Liberation Sans',sans-serif;left:-188px;width:400px;text-align:center;-webkit-text-stroke:0.25px #2e2e3a;letter-spacing:-0.3px;">4</div>
<div style="position:absolute;left:0px;top:403.4px;width:26px;height:1px;background:#cfcfcf;"></div>
<div style="position:absolute;left:0px;top:411.4px;width:26px;height:1px;background:#cfcfcf;"></div>
<div style="position:absolute;top:421.75px;line-height:19.5px;font-size:15.5px;color:#2e2e3a;font-weight:normal;white-space:nowrap;font-family:'Liberation Sans',sans-serif;left:-188px;width:400px;text-align:center;-webkit-text-stroke:0.25px #2e2e3a;letter-spacing:-0.3px;">6</div>
<div style="position:absolute;left:0px;top:443px;width:26px;height:1px;background:#cfcfcf;"></div>
<div style="position:absolute;top:442.78999999999996px;line-height:19.5px;font-size:15.5px;color:#2e2e3a;font-weight:normal;white-space:nowrap;font-family:'Liberation Sans',sans-serif;left:-188px;width:400px;text-align:center;-webkit-text-stroke:0.25px #2e2e3a;letter-spacing:-0.3px;">7</div>
<div style="position:absolute;left:0px;top:463.08px;width:26px;height:1px;background:#cfcfcf;"></div>
<div style="position:absolute;top:462.87px;line-height:19.5px;font-size:15.5px;color:#2e2e3a;font-weight:normal;white-space:nowrap;font-family:'Liberation Sans',sans-serif;left:-188px;width:400px;text-align:center;-webkit-text-stroke:0.25px #2e2e3a;letter-spacing:-0.3px;">8</div>
<div style="position:absolute;left:0px;top:483.15999999999997px;width:26px;height:1px;background:#cfcfcf;"></div>
<div style="position:absolute;top:482.94999999999993px;line-height:19.5px;font-size:15.5px;color:#2e2e3a;font-weight:normal;white-space:nowrap;font-family:'Liberation Sans',sans-serif;left:-188px;width:400px;text-align:center;-webkit-text-stroke:0.25px #2e2e3a;letter-spacing:-0.3px;">9</div>
<div style="position:absolute;left:0px;top:503.23999999999995px;width:26px;height:1px;background:#cfcfcf;"></div>
<div style="position:absolute;top:503.03px;line-height:19.5px;font-size:15.5px;color:#2e2e3a;font-weight:normal;white-space:nowrap;font-family:'Liberation Sans',sans-serif;left:-188px;width:400px;text-align:center;-webkit-text-stroke:0.25px #2e2e3a;letter-spacing:-0.3px;">10</div>
<div style="position:absolute;left:0px;top:523.3199999999999px;width:26px;height:1px;background:#cfcfcf;"></div>
<div style="position:absolute;top:523.1099999999999px;line-height:19.5px;font-size:15.5px;color:#2e2e3a;font-weight:normal;white-space:nowrap;font-family:'Liberation Sans',sans-serif;left:-188px;width:400px;text-align:center;-webkit-text-stroke:0.25px #2e2e3a;letter-spacing:-0.3px;">11</div>
<div style="position:absolute;left:0px;top:543.4px;width:26px;height:1px;background:#cfcfcf;"></div>
<div style="position:absolute;top:543.19px;line-height:19.5px;font-size:15.5px;color:#2e2e3a;font-weight:normal;white-space:nowrap;font-family:'Liberation Sans',sans-serif;left:-188px;width:400px;text-align:center;-webkit-text-stroke:0.25px #2e2e3a;letter-spacing:-0.3px;">12</div>
<div style="position:absolute;left:0px;top:563.48px;width:26px;height:1px;background:#cfcfcf;"></div>
<div style="position:absolute;top:563.27px;line-height:19.5px;font-size:15.5px;color:#2e2e3a;font-weight:normal;white-space:nowrap;font-family:'Liberation Sans',sans-serif;left:-188px;width:400px;text-align:center;-webkit-text-stroke:0.25px #2e2e3a;letter-spacing:-0.3px;">13</div>
<div style="position:absolute;left:0px;top:583.5600000000001px;width:26px;height:1px;background:#cfcfcf;"></div>
<div style="position:absolute;top:583.3500000000001px;line-height:19.5px;font-size:15.5px;color:#2d6b47;font-weight:normal;white-space:nowrap;font-family:'Liberation Sans',sans-serif;left:-188px;width:400px;text-align:center;-webkit-text-stroke:0.25px #2d6b47;letter-spacing:-0.3px;">14</div>
<div style="position:absolute;left:0px;top:603.6400000000001px;width:26px;height:1px;background:#cfcfcf;"></div>
<div style="position:absolute;top:603.4300000000001px;line-height:19.5px;font-size:15.5px;color:#2e2e3a;font-weight:normal;white-space:nowrap;font-family:'Liberation Sans',sans-serif;left:-188px;width:400px;text-align:center;-webkit-text-stroke:0.25px #2e2e3a;letter-spacing:-0.3px;">15</div>
<div style="position:absolute;left:0px;top:623.7200000000001px;width:26px;height:1px;background:#cfcfcf;"></div>
<div style="position:absolute;top:623.5100000000002px;line-height:19.5px;font-size:15.5px;color:#2e2e3a;font-weight:normal;white-space:nowrap;font-family:'Liberation Sans',sans-serif;left:-188px;width:400px;text-align:center;-webkit-text-stroke:0.25px #2e2e3a;letter-spacing:-0.3px;">16</div>
<div style="position:absolute;left:0px;top:643.8000000000002px;width:26px;height:1px;background:#cfcfcf;"></div>
<div style="position:absolute;top:653.75px;line-height:19.5px;font-size:15.5px;color:#2e2e3a;font-weight:normal;white-space:nowrap;font-family:'Liberation Sans',sans-serif;left:-188px;width:400px;text-align:center;-webkit-text-stroke:0.25px #2e2e3a;letter-spacing:-0.3px;">17</div>
<div style="position:absolute;left:0px;top:675px;width:26px;height:1px;background:#cfcfcf;"></div>
<div style="position:absolute;top:674.5899999999999px;line-height:19.5px;font-size:15.5px;color:#2e2e3a;font-weight:normal;white-space:nowrap;font-family:'Liberation Sans',sans-serif;left:-188px;width:400px;text-align:center;-webkit-text-stroke:0.25px #2e2e3a;letter-spacing:-0.3px;">18</div>
<div style="position:absolute;left:0px;top:694.68px;width:26px;height:1px;background:#cfcfcf;"></div>
<div style="position:absolute;top:694.27px;line-height:19.5px;font-size:15.5px;color:#2e2e3a;font-weight:normal;white-space:nowrap;font-family:'Liberation Sans',sans-serif;left:-188px;width:400px;text-align:center;-webkit-text-stroke:0.25px #2e2e3a;letter-spacing:-0.3px;">19</div>
<div style="position:absolute;left:0px;top:714.3599999999999px;width:26px;height:1px;background:#cfcfcf;"></div>
<div style="position:absolute;top:713.9499999999998px;line-height:19.5px;font-size:15.5px;color:#2e2e3a;font-weight:normal;white-space:nowrap;font-family:'Liberation Sans',sans-serif;left:-188px;width:400px;text-align:center;-webkit-text-stroke:0.25px #2e2e3a;letter-spacing:-0.3px;">20</div>
<div style="position:absolute;left:0px;top:734.0399999999998px;width:26px;height:1px;background:#cfcfcf;"></div>
<div style="position:absolute;top:733.6299999999999px;line-height:19.5px;font-size:15.5px;color:#2e2e3a;font-weight:normal;white-space:nowrap;font-family:'Liberation Sans',sans-serif;left:-188px;width:400px;text-align:center;-webkit-text-stroke:0.25px #2e2e3a;letter-spacing:-0.3px;">21</div>
<div style="position:absolute;left:0px;top:753.7199999999998px;width:26px;height:1px;background:#cfcfcf;"></div>
<div style="position:absolute;top:753.3099999999997px;line-height:19.5px;font-size:15.5px;color:#2e2e3a;font-weight:normal;white-space:nowrap;font-family:'Liberation Sans',sans-serif;left:-188px;width:400px;text-align:center;-webkit-text-stroke:0.25px #2e2e3a;letter-spacing:-0.3px;">22</div>
<div style="position:absolute;left:0px;top:773.3999999999997px;width:26px;height:1px;background:#cfcfcf;"></div>
<div style="position:absolute;top:772.9899999999998px;line-height:19.5px;font-size:15.5px;color:#2e2e3a;font-weight:normal;white-space:nowrap;font-family:'Liberation Sans',sans-serif;left:-188px;width:400px;text-align:center;-webkit-text-stroke:0.25px #2e2e3a;letter-spacing:-0.3px;">23</div>
<div style="position:absolute;left:0px;top:793.0799999999997px;width:26px;height:1px;background:#cfcfcf;"></div>
<div style="position:absolute;top:792.6699999999996px;line-height:19.5px;font-size:15.5px;color:#2e2e3a;font-weight:normal;white-space:nowrap;font-family:'Liberation Sans',sans-serif;left:-188px;width:400px;text-align:center;-webkit-text-stroke:0.25px #2e2e3a;letter-spacing:-0.3px;">24</div>
<div style="position:absolute;left:0px;top:812.7599999999996px;width:26px;height:1px;background:#cfcfcf;"></div>
<div style="position:absolute;top:812.3499999999997px;line-height:19.5px;font-size:15.5px;color:#2e2e3a;font-weight:normal;white-space:nowrap;font-family:'Liberation Sans',sans-serif;left:-188px;width:400px;text-align:center;-webkit-text-stroke:0.25px #2e2e3a;letter-spacing:-0.3px;">25</div>
<div style="position:absolute;left:0px;top:832.4399999999996px;width:26px;height:1px;background:#cfcfcf;"></div>
<div style="position:absolute;top:830.25px;line-height:19.5px;font-size:15.5px;color:#2e2e3a;font-weight:normal;white-space:nowrap;font-family:'Liberation Sans',sans-serif;left:-188px;width:400px;text-align:center;-webkit-text-stroke:0.25px #2e2e3a;letter-spacing:-0.3px;">26</div>
<div style="position:absolute;left:0px;top:852px;width:26px;height:1px;background:#cfcfcf;"></div>
<div style="position:absolute;left:7.5px;top:229px;width:7px;height:1.6px;background:#3a3a3a;"></div>
<div style="position:absolute;left:7.5px;top:403.6px;width:7px;height:2.5px;border-bottom:1.5px solid #555;border-radius:0 0 4px 4px"></div>
<div style="position:absolute;left:26px;top:197px;width:1478px;height:646.8px;background:#0d0e48;"></div>
<div style="position:absolute;top:238.89999999999998px;line-height:44px;font-size:40px;color:#d75b67;font-weight:bold;white-space:nowrap;font-family:'Liberation Sans',sans-serif;left:74.6px;transform:scaleX(1.1509);transform-origin:left center;-webkit-text-stroke:1.8px #d75b67;">EMPLOYEE</div>
<div style="position:absolute;top:304.2px;line-height:44px;font-size:40px;color:#d75b67;font-weight:bold;white-space:nowrap;font-family:'Liberation Sans',sans-serif;left:78.9px;transform:scaleX(1.1725);transform-origin:left center;-webkit-text-stroke:1.8px #d75b67;">TIMECARD</div>
<div style="position:absolute;left:49px;top:404px;width:309px;height:6px;background:#05051f;"></div>
<div style="position:absolute;left:400px;top:404px;width:1104px;height:7px;background:#05051f;"></div>
<div style="position:absolute;top:371.0px;line-height:21px;font-size:17px;color:#fff;font-weight:bold;white-space:nowrap;font-family:'Liberation Sans',sans-serif;right:463.20000000000005px;text-align:right;transform:scaleX(1.1444);transform-origin:right center;-webkit-text-stroke:0.6px #fff;">January, February, March</div>
<div style="position:absolute;top:371.0px;line-height:21px;font-size:17px;color:#fff;font-weight:bold;white-space:nowrap;font-family:'Liberation Sans',sans-serif;left:1081px;transform:scaleX(1.1574);transform-origin:left center;-webkit-text-stroke:0.6px #fff;">Employee Timecard: Daily, Weekly, Monthly, Yearly</div>
<div style="position:absolute;top:446.0px;line-height:16px;font-size:12px;color:#cc5c68;font-weight:bold;white-space:nowrap;font-family:'Liberation Sans',sans-serif;left:50.8px;transform:scaleX(1.2016);transform-origin:left center;-webkit-text-stroke:0.5px #cc5c68;">Employee Name:</div>
<div style="position:absolute;top:466.0px;line-height:16px;font-size:12px;color:#cc5c68;font-weight:bold;white-space:nowrap;font-family:'Liberation Sans',sans-serif;left:50.8px;transform:scaleX(1.2035);transform-origin:left center;-webkit-text-stroke:0.5px #cc5c68;">Manager:</div>
<div style="position:absolute;top:486.1px;line-height:16px;font-size:12px;color:#cc5c68;font-weight:bold;white-space:nowrap;font-family:'Liberation Sans',sans-serif;left:50.8px;transform:scaleX(1.1745);transform-origin:left center;-webkit-text-stroke:0.5px #cc5c68;">E-mail:</div>
<div style="position:absolute;top:506.20000000000005px;line-height:16px;font-size:12px;color:#cc5c68;font-weight:bold;white-space:nowrap;font-family:'Liberation Sans',sans-serif;left:50.8px;transform:scaleX(1.163);transform-origin:left center;-webkit-text-stroke:0.5px #cc5c68;">Phone:</div>
<div style="position:absolute;top:586.0px;line-height:16px;font-size:12px;color:#cc5c68;font-weight:bold;white-space:nowrap;font-family:'Liberation Sans',sans-serif;left:50.8px;transform:scaleX(1.1912);transform-origin:left center;-webkit-text-stroke:0.5px #cc5c68;">Regular hrs:</div>
<div style="position:absolute;top:606.2px;line-height:16px;font-size:12px;color:#cc5c68;font-weight:bold;white-space:nowrap;font-family:'Liberation Sans',sans-serif;left:50.8px;transform:scaleX(1.2072);transform-origin:left center;-webkit-text-stroke:0.5px #cc5c68;">Overtime hrs:</div>
<div style="position:absolute;top:657.2px;line-height:16px;font-size:12px;color:#cc5c68;font-weight:bold;white-space:nowrap;font-family:'Liberation Sans',sans-serif;left:50.8px;transform:scaleX(1.2492);transform-origin:left center;-webkit-text-stroke:0.5px #cc5c68;">Total:</div>
<div style="position:absolute;left:185px;top:462.3px;width:173px;height:1.4px;background:#9c4256;"></div>
<div style="position:absolute;left:185px;top:482.8px;width:173px;height:1.4px;background:#9c4256;"></div>
<div style="position:absolute;left:185px;top:503px;width:173px;height:1.4px;background:#9c4256;"></div>
<div style="position:absolute;left:185px;top:523px;width:173px;height:1.4px;background:#9c4256;"></div>
<div style="position:absolute;left:185px;top:623px;width:173px;height:1.4px;background:#9c4256;"></div>
<div style="position:absolute;left:185px;top:674.5px;width:173px;height:1.4px;background:#9c4256;"></div>
<div style="position:absolute;top:585.95px;line-height:15.5px;font-size:11.5px;color:#cc5c68;font-weight:normal;white-space:nowrap;font-family:'Liberation Sans',sans-serif;right:1152.5px;text-align:right;">31</div>
<div style="position:absolute;top:606.05px;line-height:15.5px;font-size:11.5px;color:#cc5c68;font-weight:normal;white-space:nowrap;font-family:'Liberation Sans',sans-serif;right:1152.5px;text-align:right;">4</div>
<div style="position:absolute;top:656.75px;line-height:15.5px;font-size:11.5px;color:#cc5c68;font-weight:normal;white-space:nowrap;font-family:'Liberation Sans',sans-serif;right:1152.5px;text-align:right;">0</div>
<div style="position:absolute;left:400px;top:411.2px;width:1104px;height:32px;background:#fff;"></div>
<div style="position:absolute;top:418.25px;line-height:18.5px;font-size:14.5px;color:#14144c;font-weight:bold;white-space:nowrap;font-family:'Liberation Sans',sans-serif;left:403.7px;transform:scaleX(1.0822);transform-origin:left center;-webkit-text-stroke:0.5px #14144c;">January</div>
<div style="position:absolute;top:418.25px;line-height:18.5px;font-size:14.5px;color:#14144c;font-weight:bold;white-space:nowrap;font-family:'Liberation Sans',sans-serif;right:799.2px;text-align:right;transform:scaleX(1.1123);transform-origin:right center;-webkit-text-stroke:0.5px #14144c;">Week 1</div>
<div style="position:absolute;top:418.25px;line-height:18.5px;font-size:14.5px;color:#14144c;font-weight:bold;white-space:nowrap;font-family:'Liberation Sans',sans-serif;right:626.8px;text-align:right;transform:scaleX(1.1117);transform-origin:right center;-webkit-text-stroke:0.5px #14144c;">Overtime</div>
<div style="position:absolute;top:418.25px;line-height:18.5px;font-size:14.5px;color:#14144c;font-weight:bold;white-space:nowrap;font-family:'Liberation Sans',sans-serif;right:528.6px;text-align:right;transform:scaleX(1.1263);transform-origin:right center;-webkit-text-stroke:0.5px #14144c;">Week 2</div>
<div style="position:absolute;top:418.25px;line-height:18.5px;font-size:14.5px;color:#14144c;font-weight:bold;white-space:nowrap;font-family:'Liberation Sans',sans-serif;right:356.79999999999995px;text-align:right;transform:scaleX(1.1117);transform-origin:right center;-webkit-text-stroke:0.5px #14144c;">Overtime</div>
<div style="position:absolute;top:418.25px;line-height:18.5px;font-size:14.5px;color:#14144c;font-weight:bold;white-space:nowrap;font-family:'Liberation Sans',sans-serif;left:1193.4px;transform:scaleX(1.1364);transform-origin:left center;-webkit-text-stroke:0.5px #14144c;">Week 3</div>
<div style="position:absolute;top:418.25px;line-height:18.5px;font-size:14.5px;color:#14144c;font-weight:bold;white-space:nowrap;font-family:'Liberation Sans',sans-serif;right:86.5px;text-align:right;transform:scaleX(1.1117);transform-origin:right center;-webkit-text-stroke:0.5px #14144c;">Overtime</div>
<div style="position:absolute;top:418.25px;line-height:18.5px;font-size:14.5px;color:#14144c;font-weight:bold;white-space:nowrap;font-family:'Liberation Sans',sans-serif;left:1463.8px;transform:scaleX(1.1364);transform-origin:left center;-webkit-text-stroke:0.5px #14144c;">Week 4</div>
<div style="position:absolute;left:400px;top:443.2px;width:1104px;height:20.38px;background:#eeeeee;"></div>
<div style="position:absolute;top:445.54px;line-height:16px;font-size:12px;color:#14144c;font-weight:bold;white-space:nowrap;font-family:'Liberation Sans',sans-serif;left:403.2px;transform:scaleX(1.1589);transform-origin:left center;-webkit-text-stroke:0.45px #14144c;">Monday</div>
<div style="position:absolute;top:443.14px;line-height:19px;font-size:15px;color:#4e4e4e;font-weight:normal;white-space:nowrap;font-family:'Liberation Sans',sans-serif;right:798px;text-align:right;letter-spacing:-0.4px;">8.0</div>
<div style="position:absolute;left:400px;top:463.28px;width:1104px;height:20.38px;background:#ffffff;"></div>
<div style="position:absolute;top:465.62px;line-height:16px;font-size:12px;color:#14144c;font-weight:bold;white-space:nowrap;font-family:'Liberation Sans',sans-serif;left:403.2px;transform:scaleX(1.1894);transform-origin:left center;-webkit-text-stroke:0.45px #14144c;">Tuesday</div>
<div style="position:absolute;top:463.21999999999997px;line-height:19px;font-size:15px;color:#4e4e4e;font-weight:normal;white-space:nowrap;font-family:'Liberation Sans',sans-serif;right:798px;text-align:right;letter-spacing:-0.4px;">8.0</div>
<div style="position:absolute;top:463.21999999999997px;line-height:19px;font-size:15px;color:#4e4e4e;font-weight:normal;white-space:nowrap;font-family:'Liberation Sans',sans-serif;right:626px;text-align:right;letter-spacing:-0.4px;">2.0</div>
<div style="position:absolute;left:400px;top:483.35999999999996px;width:1104px;height:20.38px;background:#eeeeee;"></div>
<div style="position:absolute;top:485.7px;line-height:16px;font-size:12px;color:#14144c;font-weight:bold;white-space:nowrap;font-family:'Liberation Sans',sans-serif;left:403.2px;transform:scaleX(1.1637);transform-origin:left center;-webkit-text-stroke:0.45px #14144c;">Wednesday</div>
<div style="position:absolute;left:400px;top:503.43999999999994px;width:1104px;height:20.38px;background:#ffffff;"></div>
<div style="position:absolute;top:505.77999999999986px;line-height:16px;font-size:12px;color:#14144c;font-weight:bold;white-space:nowrap;font-family:'Liberation Sans',sans-serif;left:403.2px;transform:scaleX(1.1617);transform-origin:left center;-webkit-text-stroke:0.45px #14144c;">Thursday</div>
<div style="position:absolute;left:400px;top:523.52px;width:1104px;height:20.38px;background:#eeeeee;"></div>
<div style="position:absolute;top:525.8599999999999px;line-height:16px;font-size:12px;color:#14144c;font-weight:bold;white-space:nowrap;font-family:'Liberation Sans',sans-serif;left:403.2px;transform:scaleX(1.1648);transform-origin:left center;-webkit-text-stroke:0.45px #14144c;">Friday</div>
<div style="position:absolute;left:400px;top:543.6px;width:1104px;height:20.38px;background:#ffffff;"></div>
<div style="position:absolute;top:545.9399999999999px;line-height:16px;font-size:12px;color:#14144c;font-weight:bold;white-space:nowrap;font-family:'Liberation Sans',sans-serif;left:403.2px;transform:scaleX(1.1887);transform-origin:left center;-webkit-text-stroke:0.45px #14144c;">Saturday</div>
<div style="position:absolute;left:400px;top:563.6800000000001px;width:1104px;height:20.38px;background:#eeeeee;"></div>
<div style="position:absolute;top:566.02px;line-height:16px;font-size:12px;color:#14144c;font-weight:bold;white-space:nowrap;font-family:'Liberation Sans',sans-serif;left:403.2px;transform:scaleX(1.1386);transform-origin:left center;-webkit-text-stroke:0.45px #14144c;">Sunday</div>
<div style="position:absolute;left:400px;top:442.2px;width:1104px;height:1.5px;background:#ddb0b4;"></div>
<div style="position:absolute;left:400px;top:583.7600000000001px;width:1104px;height:20.08px;background:#fff;"></div>
<div style="position:absolute;left:400px;top:583.0600000000001px;width:1104px;height:1.5px;background:#ddb0b4;"></div>
<div style="position:absolute;top:586.1px;line-height:16px;font-size:12px;color:#10102e;font-weight:bold;white-space:nowrap;font-family:'Liberation Sans',sans-serif;left:403.2px;transform:scaleX(1.2288);transform-origin:left center;-webkit-text-stroke:0.45px #10102e;">Total weekly hours</div>
<div style="position:absolute;top:583.5000000000001px;line-height:19px;font-size:15px;color:#4e4e4e;font-weight:normal;white-space:nowrap;font-family:'Liberation Sans',sans-serif;right:798px;text-align:right;letter-spacing:-0.4px;">16.0</div>
<div style="position:absolute;top:583.5000000000001px;line-height:19px;font-size:15px;color:#4e4e4e;font-weight:normal;white-space:nowrap;font-family:'Liberation Sans',sans-serif;right:626px;text-align:right;letter-spacing:-0.4px;">2.0</div>
<div style="position:absolute;top:583.5000000000001px;line-height:19px;font-size:15px;color:#4e4e4e;font-weight:normal;white-space:nowrap;font-family:'Liberation Sans',sans-serif;right:527px;text-align:right;letter-spacing:-0.4px;">0.0</div>
<div style="position:absolute;top:583.5000000000001px;line-height:19px;font-size:15px;color:#4e4e4e;font-weight:normal;white-space:nowrap;font-family:'Liberation Sans',sans-serif;right:355px;text-align:right;letter-spacing:-0.4px;">0.0</div>
<div style="position:absolute;top:583.5000000000001px;line-height:19px;font-size:15px;color:#4e4e4e;font-weight:normal;white-space:nowrap;font-family:'Liberation Sans',sans-serif;left:1041px;width:400px;text-align:center;letter-spacing:-0.4px;">0.0</div>
<div style="position:absolute;top:583.5000000000001px;line-height:19px;font-size:15px;color:#4e4e4e;font-weight:normal;white-space:nowrap;font-family:'Liberation Sans',sans-serif;left:1212px;width:400px;text-align:center;letter-spacing:-0.4px;">0.0</div>
<div style="position:absolute;top:583.5000000000001px;line-height:19px;font-size:15px;color:#4e4e4e;font-weight:normal;white-space:nowrap;font-family:'Liberation Sans',sans-serif;right:-9px;text-align:right;letter-spacing:-0.4px;">0.0</div>
<div style="position:absolute;left:398.5px;top:602.6px;width:1105.5px;height:21.6px;background:#3a1848;"></div>
<div style="position:absolute;left:400px;top:603.5px;width:1104px;height:19.8px;background:#d45a66;"></div>
<div style="position:absolute;top:605.8px;line-height:16px;font-size:12px;color:#3c1a48;font-weight:bold;white-space:nowrap;font-family:'Liberation Sans',sans-serif;left:403.2px;transform:scaleX(1.2122);transform-origin:left center;-webkit-text-stroke:0.45px #3c1a48;">Jan. total: Regular hours</div>
<div style="position:absolute;top:605.8px;line-height:16px;font-size:12px;color:#3c1a48;font-weight:bold;white-space:nowrap;font-family:'Liberation Sans',sans-serif;right:798.4px;text-align:right;transform:scaleX(1.1965);transform-origin:right center;-webkit-text-stroke:0.45px #3c1a48;">16.0</div>
<div style="position:absolute;top:605.8px;line-height:16px;font-size:12px;color:#3c1a48;font-weight:bold;white-space:nowrap;font-family:'Liberation Sans',sans-serif;right:528px;text-align:right;transform:scaleX(1.2322);transform-origin:right center;-webkit-text-stroke:0.45px #3c1a48;">Jan. total: Overtime</div>
<div style="position:absolute;top:605.8px;line-height:16px;font-size:12px;color:#3c1a48;font-weight:bold;white-space:nowrap;font-family:'Liberation Sans',sans-serif;left:869.4000000000001px;width:400px;text-align:center;transform:scaleX(1.2434);transform-origin:center center;-webkit-text-stroke:0.45px #3c1a48;">2.0</div>
<div style="position:absolute;left:400px;top:642.7px;width:1104px;height:32.3px;background:#fff;"></div>
<div style="position:absolute;top:649.9px;line-height:18.5px;font-size:14.5px;color:#14144c;font-weight:bold;white-space:nowrap;font-family:'Liberation Sans',sans-serif;left:403.7px;transform:scaleX(1.0957);transform-origin:left center;-webkit-text-stroke:0.5px #14144c;">February</div>
<div style="position:absolute;top:649.9px;line-height:18.5px;font-size:14.5px;color:#14144c;font-weight:bold;white-space:nowrap;font-family:'Liberation Sans',sans-serif;right:835px;text-align:right;transform:scaleX(1.1123);transform-origin:right center;-webkit-text-stroke:0.5px #14144c;">Week 1</div>
<div style="position:absolute;top:649.9px;line-height:18.5px;font-size:14.5px;color:#14144c;font-weight:bold;white-space:nowrap;font-family:'Liberation Sans',sans-serif;right:626.8px;text-align:right;transform:scaleX(1.1117);transform-origin:right center;-webkit-text-stroke:0.5px #14144c;">Overtime</div>
<div style="position:absolute;top:649.9px;line-height:18.5px;font-size:14.5px;color:#14144c;font-weight:bold;white-space:nowrap;font-family:'Liberation Sans',sans-serif;right:528.6px;text-align:right;transform:scaleX(1.1263);transform-origin:right center;-webkit-text-stroke:0.5px #14144c;">Week 2</div>
<div style="position:absolute;top:649.9px;line-height:18.5px;font-size:14.5px;color:#14144c;font-weight:bold;white-space:nowrap;font-family:'Liberation Sans',sans-serif;right:356.79999999999995px;text-align:right;transform:scaleX(1.1117);transform-origin:right center;-webkit-text-stroke:0.5px #14144c;">Overtime</div>
<div style="position:absolute;top:649.9px;line-height:18.5px;font-size:14.5px;color:#14144c;font-weight:bold;white-space:nowrap;font-family:'Liberation Sans',sans-serif;left:1193.4px;transform:scaleX(1.1364);transform-origin:left center;-webkit-text-stroke:0.5px #14144c;">Week 3</div>
<div style="position:absolute;top:649.9px;line-height:18.5px;font-size:14.5px;color:#14144c;font-weight:bold;white-space:nowrap;font-family:'Liberation Sans',sans-serif;right:86.5px;text-align:right;transform:scaleX(1.1117);transform-origin:right center;-webkit-text-stroke:0.5px #14144c;">Overtime</div>
<div style="position:absolute;top:649.9px;line-height:18.5px;font-size:14.5px;color:#14144c;font-weight:bold;white-space:nowrap;font-family:'Liberation Sans',sans-serif;left:1463.8px;transform:scaleX(1.1364);transform-origin:left center;-webkit-text-stroke:0.5px #14144c;">Week 4</div>
<div style="position:absolute;left:400px;top:675.0px;width:1104px;height:19.98px;background:#eeeeee;"></div>
<div style="position:absolute;top:677.14px;line-height:16px;font-size:12px;color:#14144c;font-weight:bold;white-space:nowrap;font-family:'Liberation Sans',sans-serif;left:403.2px;transform:scaleX(1.1589);transform-origin:left center;-webkit-text-stroke:0.45px #14144c;">Monday</div>
<div style="position:absolute;top:674.74px;line-height:19px;font-size:15px;color:#4e4e4e;font-weight:normal;white-space:nowrap;font-family:'Liberation Sans',sans-serif;right:798px;text-align:right;letter-spacing:-0.4px;">8.0</div>
<div style="position:absolute;top:674.74px;line-height:19px;font-size:15px;color:#4e4e4e;font-weight:normal;white-space:nowrap;font-family:'Liberation Sans',sans-serif;right:626px;text-align:right;letter-spacing:-0.4px;">2.0</div>
<div style="position:absolute;left:400px;top:694.68px;width:1104px;height:19.98px;background:#ffffff;"></div>
<div style="position:absolute;top:696.8199999999999px;line-height:16px;font-size:12px;color:#14144c;font-weight:bold;white-space:nowrap;font-family:'Liberation Sans',sans-serif;left:403.2px;transform:scaleX(1.1894);transform-origin:left center;-webkit-text-stroke:0.45px #14144c;">Tuesday</div>
<div style="position:absolute;top:694.42px;line-height:19px;font-size:15px;color:#4e4e4e;font-weight:normal;white-space:nowrap;font-family:'Liberation Sans',sans-serif;right:798px;text-align:right;letter-spacing:-0.4px;">7.0</div>
<div style="position:absolute;left:400px;top:714.3599999999999px;width:1104px;height:19.98px;background:#eeeeee;"></div>
<div style="position:absolute;top:716.4999999999999px;line-height:16px;font-size:12px;color:#14144c;font-weight:bold;white-space:nowrap;font-family:'Liberation Sans',sans-serif;left:403.2px;transform:scaleX(1.1637);transform-origin:left center;-webkit-text-stroke:0.45px #14144c;">Wednesday</div>
<div style="position:absolute;left:400px;top:734.0399999999998px;width:1104px;height:19.98px;background:#ffffff;"></div>
<div style="position:absolute;top:736.1799999999998px;line-height:16px;font-size:12px;color:#14144c;font-weight:bold;white-space:nowrap;font-family:'Liberation Sans',sans-serif;left:403.2px;transform:scaleX(1.1617);transform-origin:left center;-webkit-text-stroke:0.45px #14144c;">Thursday</div>
<div style="position:absolute;left:400px;top:753.7199999999998px;width:1104px;height:19.98px;background:#eeeeee;"></div>
<div style="position:absolute;top:755.8599999999998px;line-height:16px;font-size:12px;color:#14144c;font-weight:bold;white-space:nowrap;font-family:'Liberation Sans',sans-serif;left:403.2px;transform:scaleX(1.1648);transform-origin:left center;-webkit-text-stroke:0.45px #14144c;">Friday</div>
<div style="position:absolute;left:400px;top:773.3999999999997px;width:1104px;height:19.98px;background:#ffffff;"></div>
<div style="position:absolute;top:775.5399999999997px;line-height:16px;font-size:12px;color:#14144c;font-weight:bold;white-space:nowrap;font-family:'Liberation Sans',sans-serif;left:403.2px;transform:scaleX(1.1887);transform-origin:left center;-webkit-text-stroke:0.45px #14144c;">Saturday</div>
<div style="position:absolute;left:400px;top:793.0799999999997px;width:1104px;height:19.98px;background:#eeeeee;"></div>
<div style="position:absolute;top:795.2199999999997px;line-height:16px;font-size:12px;color:#14144c;font-weight:bold;white-space:nowrap;font-family:'Liberation Sans',sans-serif;left:403.2px;transform:scaleX(1.1386);transform-origin:left center;-webkit-text-stroke:0.45px #14144c;">Sunday</div>
<div style="position:absolute;left:400px;top:674.0px;width:1104px;height:1.5px;background:#ddb0b4;"></div>
<div style="position:absolute;left:400px;top:812.7599999999996px;width:1104px;height:19.68px;background:#fff;"></div>
<div style="position:absolute;left:400px;top:812.0599999999996px;width:1104px;height:1.5px;background:#ddb0b4;"></div>
<div style="position:absolute;top:814.8999999999996px;line-height:16px;font-size:12px;color:#10102e;font-weight:bold;white-space:nowrap;font-family:'Liberation Sans',sans-serif;left:403.2px;transform:scaleX(1.2288);transform-origin:left center;-webkit-text-stroke:0.45px #10102e;">Total weekly hours</div>
<div style="position:absolute;top:812.2999999999997px;line-height:19px;font-size:15px;color:#4e4e4e;font-weight:normal;white-space:nowrap;font-family:'Liberation Sans',sans-serif;right:798px;text-align:right;letter-spacing:-0.4px;">15.0</div>
<div style="position:absolute;top:812.2999999999997px;line-height:19px;font-size:15px;color:#4e4e4e;font-weight:normal;white-space:nowrap;font-family:'Liberation Sans',sans-serif;right:626px;text-align:right;letter-spacing:-0.4px;">2.0</div>
<div style="position:absolute;top:812.2999999999997px;line-height:19px;font-size:15px;color:#4e4e4e;font-weight:normal;white-space:nowrap;font-family:'Liberation Sans',sans-serif;right:527px;text-align:right;letter-spacing:-0.4px;">0.0</div>
<div style="position:absolute;top:812.2999999999997px;line-height:19px;font-size:15px;color:#4e4e4e;font-weight:normal;white-space:nowrap;font-family:'Liberation Sans',sans-serif;right:355px;text-align:right;letter-spacing:-0.4px;">0.0</div>
<div style="position:absolute;top:812.2999999999997px;line-height:19px;font-size:15px;color:#4e4e4e;font-weight:normal;white-space:nowrap;font-family:'Liberation Sans',sans-serif;left:1041px;width:400px;text-align:center;letter-spacing:-0.4px;">0.0</div>
<div style="position:absolute;top:812.2999999999997px;line-height:19px;font-size:15px;color:#4e4e4e;font-weight:normal;white-space:nowrap;font-family:'Liberation Sans',sans-serif;left:1212px;width:400px;text-align:center;letter-spacing:-0.4px;">0.0</div>
<div style="position:absolute;top:812.2999999999997px;line-height:19px;font-size:15px;color:#4e4e4e;font-weight:normal;white-space:nowrap;font-family:'Liberation Sans',sans-serif;right:-9px;text-align:right;letter-spacing:-0.4px;">0.0</div>
<div style="position:absolute;left:398.5px;top:831.6px;width:1105.5px;height:12.2px;background:#3a1848;"></div>
<div style="position:absolute;left:400px;top:832.6px;width:1104px;height:11.2px;background:#d45a66;"></div>
<div style="position:absolute;left:400px;top:832.4px;width:1104px;height:11.4px;overflow:hidden">
<div style="position:absolute;top:3.1999999999999993px;line-height:16px;font-size:12px;color:#3c1a48;font-weight:bold;white-space:nowrap;transform:scaleX(1.2066);transform-origin:left center;-webkit-text-stroke:0.45px #3c1a48;left:3.2px;">Feb. total: Regular hours</div>
<div style="position:absolute;top:3.1999999999999993px;line-height:16px;font-size:12px;color:#3c1a48;font-weight:bold;white-space:nowrap;transform:scaleX(1.3137);transform-origin:right center;-webkit-text-stroke:0.45px #3c1a48;right:794.4px;">16</div>
<div style="position:absolute;top:3.1999999999999993px;line-height:16px;font-size:12px;color:#3c1a48;font-weight:bold;white-space:nowrap;transform:scaleX(1.2251);transform-origin:right center;-webkit-text-stroke:0.45px #3c1a48;right:524px;">Feb. total: Overtime</div>
<div style="position:absolute;top:3.1999999999999993px;line-height:16px;font-size:12px;color:#3c1a48;font-weight:bold;white-space:nowrap;transform:scaleX(1.129);transform-origin:center center;-webkit-text-stroke:0.45px #3c1a48;left:569.4px;width:200px;text-align:center;">2</div>
</div>
<div style="position:absolute;left:709.4px;top:197px;width:6px;height:214.39999999999998px;background:rgba(10,18,140,0.4);"></div>
<div style="position:absolute;left:709.4px;top:623.4px;width:6px;height:19.300000000000068px;background:rgba(10,18,140,0.45);"></div>
<div style="position:absolute;left:709.4px;top:603.2px;width:6px;height:20.199999999999932px;background:rgba(10,18,140,0.25);"></div>
<div style="position:absolute;left:709.4px;top:832.4px;width:6px;height:11.399999999999977px;background:rgba(10,18,140,0.25);"></div>
<div style="position:absolute;left:711.6999999999999px;top:411.4px;width:1.4px;height:191.8px;background:#55508a;"></div>
<div style="position:absolute;left:711.6999999999999px;top:642.7px;width:1.4px;height:189.7px;background:#55508a;"></div>
<div style="position:absolute;left:711.6999999999999px;top:603.2px;width:1.4px;height:20.2px;background:#3a2060;"></div>
<div style="position:absolute;left:711.6999999999999px;top:832.4px;width:1.4px;height:11.4px;background:#3a2060;"></div>
<div style="position:absolute;left:881px;top:197px;width:6px;height:214.39999999999998px;background:rgba(10,18,140,0.4);"></div>
<div style="position:absolute;left:881px;top:623.4px;width:6px;height:19.300000000000068px;background:rgba(10,18,140,0.45);"></div>
<div style="position:absolute;left:881px;top:603.2px;width:6px;height:20.199999999999932px;background:rgba(10,18,140,0.25);"></div>
<div style="position:absolute;left:881px;top:832.4px;width:6px;height:11.399999999999977px;background:rgba(10,18,140,0.25);"></div>
<div style="position:absolute;left:883.05px;top:411.4px;width:1.9px;height:191.8px;background:#8686b2;"></div>
<div style="position:absolute;left:883.05px;top:642.7px;width:1.9px;height:189.7px;background:#8686b2;"></div>
<div style="position:absolute;left:883.3px;top:603.2px;width:1.4px;height:20.2px;background:#3a2060;"></div>
<div style="position:absolute;left:883.3px;top:832.4px;width:1.4px;height:11.4px;background:#3a2060;"></div>
<div style="position:absolute;left:979.8px;top:197px;width:6px;height:214.39999999999998px;background:rgba(10,18,140,0.4);"></div>
<div style="position:absolute;left:979.8px;top:623.4px;width:6px;height:19.300000000000068px;background:rgba(10,18,140,0.45);"></div>
<div style="position:absolute;left:979.8px;top:603.2px;width:6px;height:20.199999999999932px;background:rgba(10,18,140,0.25);"></div>
<div style="position:absolute;left:979.8px;top:832.4px;width:6px;height:11.399999999999977px;background:rgba(10,18,140,0.25);"></div>
<div style="position:absolute;left:981.8499999999999px;top:411.4px;width:1.9px;height:191.8px;background:#8686b2;"></div>
<div style="position:absolute;left:981.8499999999999px;top:642.7px;width:1.9px;height:189.7px;background:#8686b2;"></div>
<div style="position:absolute;left:982.0999999999999px;top:603.2px;width:1.4px;height:20.2px;background:#3a2060;"></div>
<div style="position:absolute;left:982.0999999999999px;top:832.4px;width:1.4px;height:11.4px;background:#3a2060;"></div>
<div style="position:absolute;left:1151.2px;top:197px;width:6px;height:214.39999999999998px;background:rgba(10,18,140,0.4);"></div>
<div style="position:absolute;left:1151.2px;top:623.4px;width:6px;height:19.300000000000068px;background:rgba(10,18,140,0.45);"></div>
<div style="position:absolute;left:1151.2px;top:603.2px;width:6px;height:20.199999999999932px;background:rgba(10,18,140,0.25);"></div>
<div style="position:absolute;left:1151.2px;top:832.4px;width:6px;height:11.399999999999977px;background:rgba(10,18,140,0.25);"></div>
<div style="position:absolute;left:1153.6000000000001px;top:411.4px;width:1.2px;height:191.8px;background:#2a2a66;"></div>
<div style="position:absolute;left:1153.6000000000001px;top:642.7px;width:1.2px;height:189.7px;background:#2a2a66;"></div>
<div style="position:absolute;left:1153.5px;top:603.2px;width:1.4px;height:20.2px;background:#3a2060;"></div>
<div style="position:absolute;left:1153.5px;top:832.4px;width:1.4px;height:11.4px;background:#3a2060;"></div>
<div style="position:absolute;left:184.400px;top:582px;width:171.500px;height:18px;border:2px solid #8f9691;box-shadow:0 0.800px 0 #4a8a62"></div>
<div style="position:absolute;left:356.5px;top:600.5px;width:3.6px;height:3.6px;background:#5d8f6e;"></div>
<svg style="position:absolute;left:0;top:0" width="1508" height="896" viewBox="0 0 1508 896"><g stroke="#0b15a2" stroke-width="2.700" stroke-linecap="round" fill="#0b15a2"><path d="M755 212.200 L214.800 611.500"/><path d="M1024.800 212.200 L214.800 611.500"/><circle cx="755" cy="212.200" r="3"/><circle cx="1024.800" cy="212.200" r="3"/><path d="M290 556 L214.800 611.500 M330 554.600 L214.800 611.500" stroke-width="3.400" opacity="0.850"/></g></svg>
<svg style="position:absolute;left:271px;top:585px" width="18" height="18" viewBox="0 0 18 18"><path d="M6.500 1.500h5v5h5v5h-5v5h-5v-5h-5v-5h5z" fill="#fff" stroke="#111" stroke-width="1"/></svg>
<div style="position:absolute;left:1504px;top:178px;width:4px;height:665.8px;background:#e7e7e7;"></div>
<div style="position:absolute;left:1503.6px;top:197px;width:1px;height:646.8px;background:#c4c4ca;"></div>
<div style="position:absolute;left:1505px;top:180px;width:3px;height:34px;background:#fafafa;"></div>
<div style="position:absolute;left:0px;top:843.8px;width:1508px;height:23.7px;background:#e5e5e5;"></div>
<div style="position:absolute;top:849.5px;line-height:12px;font-size:8px;color:#c9c9c9;font-weight:normal;white-space:nowrap;font-family:'Liberation Sans',sans-serif;left:-182.5px;width:400px;text-align:center;">&#9664;</div>
<div style="position:absolute;top:849.5px;line-height:12px;font-size:8px;color:#c9c9c9;font-weight:normal;white-space:nowrap;font-family:'Liberation Sans',sans-serif;left:-160px;width:400px;text-align:center;">&#9654;</div>
<div style="position:absolute;left:75px;top:844px;width:143px;height:19.5px;background:linear-gradient(#fafafa,#f0f0f0 55%,#c4c4c4);border-bottom:2px solid #4c9468"></div>
<div style="position:absolute;top:846.0px;line-height:17px;font-size:13px;color:#2f7d50;font-weight:bold;white-space:nowrap;font-family:'Liberation Sans',sans-serif;left:-53.30000000000001px;width:400px;text-align:center;letter-spacing:0.15px;text-shadow:0 1px 1px rgba(0,0,0,.35);">YEARLY TIMESHEET</div>
<svg style="position:absolute;left:244px;top:847px" width="18" height="18" viewBox="0 0 18 18"><circle cx="9" cy="9" r="7.6" fill="none" stroke="#808080" stroke-width="1.1"/><path d="M9 5v8M5 9h8" stroke="#707070" stroke-width="1.4"/></svg>
<div style="position:absolute;left:911px;top:850px;width:2px;height:12px;background:repeating-linear-gradient(#aaa 0 2px,transparent 2px 4px)"></div>
<div style="position:absolute;left:925px;top:847px;width:14px;height:17px;background:#fff;"></div>
<div style="position:absolute;top:849.0px;line-height:13px;font-size:9px;color:#555;font-weight:normal;white-space:nowrap;font-family:'Liberation Sans',sans-serif;left:733.2px;width:400px;text-align:center;">&#9664;</div>
<div style="position:absolute;left:942px;top:847px;width:1px;height:17px;background:#e2e2e2;"></div>
<div style="position:absolute;left:939px;top:847px;width:366px;height:17px;background:#fff;"></div>
<div style="position:absolute;left:1305px;top:847px;width:135px;height:17px;background:#dedede;"></div>
<div style="position:absolute;left:0px;top:867.5px;width:1508px;height:22.5px;background:#f1f1f1;"></div>
<div style="position:absolute;top:871.4px;line-height:14.8px;font-size:10.8px;color:#606060;font-weight:normal;white-space:nowrap;font-family:'Liberation Sans',sans-serif;left:1.5px;">Ready</div>
<div style="position:absolute;left:1271px;top:869px;width:27px;height:21px;background:#cfcfcf;"></div>
<svg style="position:absolute;left:1277px;top:871px" width="16" height="16" viewBox="0 0 16 16"><g fill="none" stroke="#9c9c9c" stroke-width="1.1"><rect x="1" y="1" width="13" height="13"/><path d="M1 5.300h13M1 9.700h13M5.300 1v13M9.700 1v13"/></g></svg>
<svg style="position:absolute;left:1304px;top:871px" width="16" height="16" viewBox="0 0 16 16"><g fill="#fff" stroke="#ababab" stroke-width="1.1"><rect x="1.500" y="1.500" width="12" height="12"/><rect x="5" y="1.500" width="5" height="8"/></g></svg>
<svg style="position:absolute;left:1332px;top:871px" width="16" height="16" viewBox="0 0 16 16"><g fill="#fff" stroke="#ababab" stroke-width="1.1"><rect x="1.500" y="1.500" width="12" height="12"/><path d="M1.500 8.500h12M7.500 1.500v7"/></g></svg>
<div style="position:absolute;left:1358px;top:877.5px;width:6px;height:1.8px;background:#666;"></div>
<div style="position:absolute;left:1369px;top:877.8px;width:104px;height:1px;background:#c6c6c6;"></div>
<div style="position:absolute;left:1419.5px;top:872px;width:4px;height:12px;background:#66666e;"></div>
<div style="position:absolute;top:868.5px;line-height:19px;font-size:15px;color:#555;font-weight:normal;white-space:nowrap;font-family:'Liberation Sans',sans-serif;left:1282px;width:400px;text-align:center;">+</div>
<div style="position:absolute;top:870.75px;line-height:15.5px;font-size:11.5px;color:#555;font-weight:normal;white-space:nowrap;font-family:'Liberation Sans',sans-serif;left:1493px;">100%</div>
<div style="position:absolute;left:1440px;top:844px;width:64px;height:28.5px;background:rgba(120,120,120,0.72)"></div>
<div style="position:absolute;left:1449px;top:850px;width:5px;height:16px;background:rgba(175,175,175,.9);"></div>
<div style="position:absolute;left:1458px;top:850px;width:5px;height:16px;background:rgba(175,175,175,.9);"></div>
<div style="position:absolute;left:1483px;top:849px;width:14px;height:17px;background:rgba(200,200,200,.8);"></div>
<div style="position:absolute;top:851.0px;line-height:11px;font-size:7px;color:#444;font-weight:normal;white-space:nowrap;font-family:'Liberation Sans',sans-serif;left:1295px;width:400px;text-align:center;">&#9654;</div>
<div style="position:absolute;left:0px;top:890px;width:1508px;height:6px;background:#8d8d8d;"></div>
<div style="position:absolute;left:0px;top:889.6px;width:1508px;height:1.2px;background:#2a2a2a;"></div>
<div style="position:absolute;left:0px;top:890.8px;width:191px;height:5.2px;background:#9a9a9a;"></div>
<div style="position:absolute;left:540px;top:890.8px;width:184px;height:5.2px;background:#98989a;"></div>
<div style="position:absolute;left:724px;top:890.8px;width:784px;height:5.2px;background:#44626a;"></div>
<div style="position:absolute;top:890.5px;line-height:13px;font-size:9px;color:#5a5a66;font-weight:normal;white-space:nowrap;font-family:'Liberation Sans',sans-serif;left:2px;">Sagorsoor Design Set</div>
<div style="position:absolute;top:890.5px;line-height:13px;font-size:9px;color:#5a5a66;font-weight:normal;white-space:nowrap;font-family:'Liberation Sans',sans-serif;left:150px;">2</div>
</div></body></html>
